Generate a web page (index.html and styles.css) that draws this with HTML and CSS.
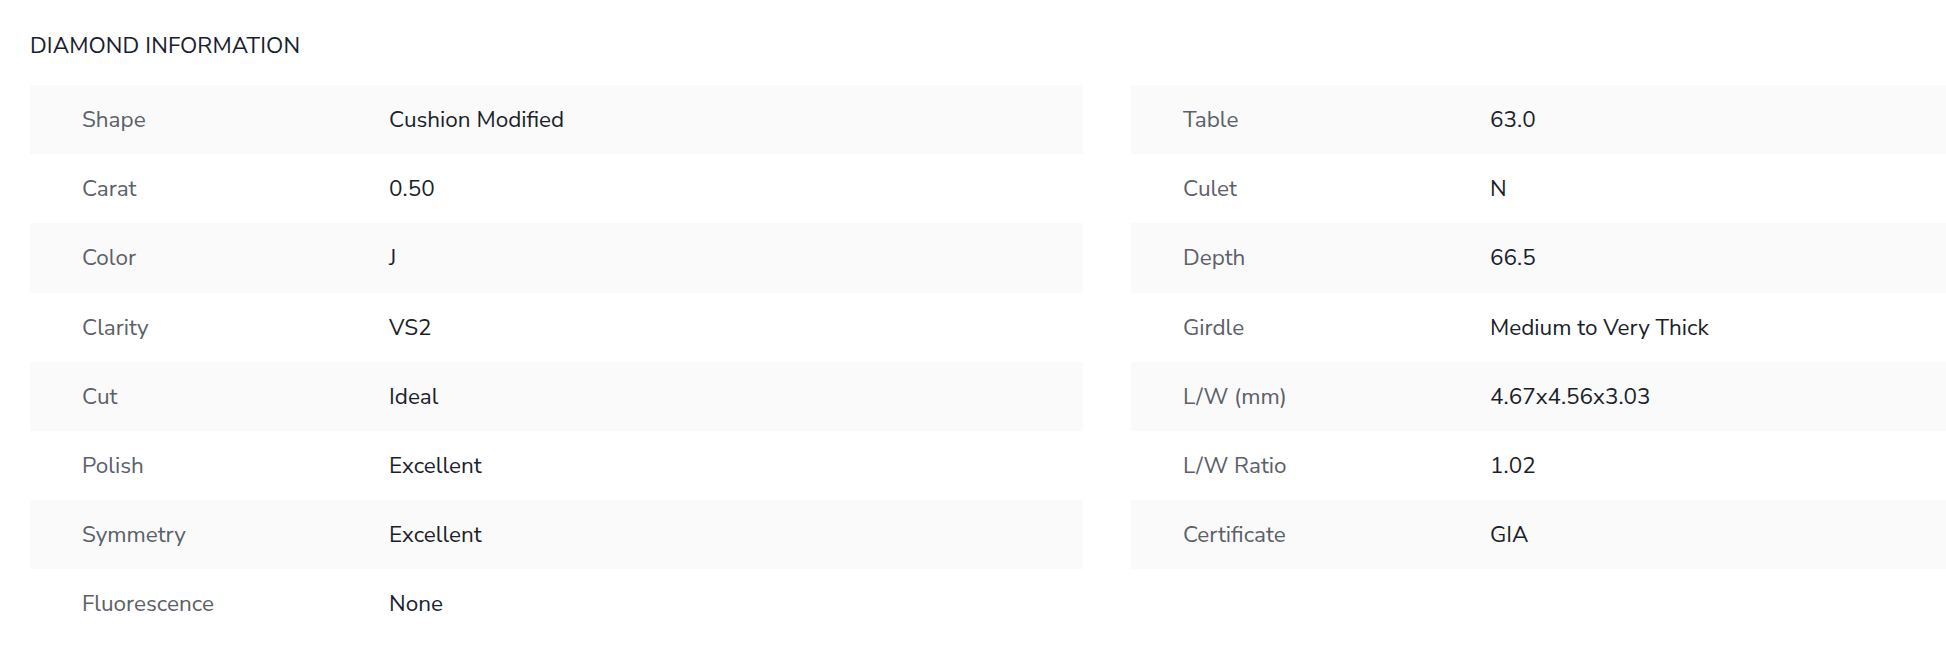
FILE: index.html
```html
<!DOCTYPE html>
<html lang="en">
<head>
<meta charset="utf-8">
<title>Diamond Information</title>
<link rel="stylesheet" href="styles.css">
</head>
<body>
<section class="info">
  <h2 class="info-title">DIAMOND INFORMATION</h2>
  <div class="info-grid">
    <div class="info-col">
      <div class="row"><span class="label">Shape</span><span class="value">Cushion Modified</span></div>
      <div class="row"><span class="label">Carat</span><span class="value">0.50</span></div>
      <div class="row"><span class="label">Color</span><span class="value">J</span></div>
      <div class="row"><span class="label">Clarity</span><span class="value">VS2</span></div>
      <div class="row"><span class="label">Cut</span><span class="value">Ideal</span></div>
      <div class="row"><span class="label">Polish</span><span class="value">Excellent</span></div>
      <div class="row"><span class="label">Symmetry</span><span class="value">Excellent</span></div>
      <div class="row"><span class="label">Fluorescence</span><span class="value">None</span></div>
    </div>
    <div class="info-col">
      <div class="row"><span class="label">Table</span><span class="value">63.0</span></div>
      <div class="row"><span class="label">Culet</span><span class="value">N</span></div>
      <div class="row"><span class="label">Depth</span><span class="value">66.5</span></div>
      <div class="row"><span class="label">Girdle</span><span class="value">Medium to Very Thick</span></div>
      <div class="row"><span class="label">L/W (mm)</span><span class="value">4.67x4.56x3.03</span></div>
      <div class="row"><span class="label">L/W Ratio</span><span class="value">1.02</span></div>
      <div class="row"><span class="label">Certificate</span><span class="value">GIA</span></div>
    </div>
  </div>
</section>
</body>
</html>
```

FILE: styles.css
```css
html, body {
  margin: 0;
  padding: 0;
  background: #ffffff;
  overflow: hidden;
}

body {
  font-family: "Nunito Sans", Lato, "Noto Sans", sans-serif;
  color: #1b2230;
}

.info {
  padding: 29px 0 0 30px;
}

.info-title {
  margin: 0;
  font-size: 22.5px;
  font-weight: 400;
  line-height: 34px;
  color: #18202e;
  letter-spacing: 0.1px;
}

.info-grid {
  margin-top: 22px;
  display: grid;
  grid-template-columns: 1053px 1fr;
  column-gap: 48px;
}

.info-col {
  display: flex;
  flex-direction: column;
}

.row {
  height: 69.2px;
  display: grid;
  grid-template-columns: 307px 1fr;
  align-items: center;
  padding-left: 52px;
  font-size: 22.5px;
}

.row:nth-child(odd) {
  background: #fafafa;
}

.label {
  color: #5b6069;
}

.value {
  color: #1a1f2b;
}
```
